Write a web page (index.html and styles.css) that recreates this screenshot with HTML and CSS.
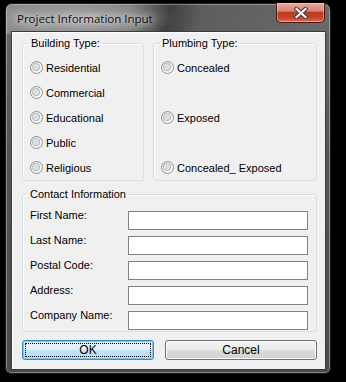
FILE: index.html
```html
<!DOCTYPE html>
<html lang="en">
<head>
    <meta charset="UTF-8">
    <title>Project Information Input</title>
    <link rel="stylesheet" href="styles.css">
</head>
<body>
<div class="window">
    <div class="titlebar">
        <span class="title">Project Information Input</span>
        <button class="close" type="button" aria-label="Close">
            <svg width="14" height="12" viewBox="0 0 14 12">
                <path d="M2.5 2 L11.5 10 M11.5 2 L2.5 10" stroke="#3a3a3a" stroke-width="4.2" stroke-linecap="square"/>
                <path d="M2.5 2 L11.5 10 M11.5 2 L2.5 10" stroke="#fff" stroke-width="2.2" stroke-linecap="square"/>
            </svg>
        </button>
    </div>
    <form class="client" id="projectForm">
        <div class="groups">
            <fieldset class="group building">
                <legend>Building Type:</legend>
                <div class="options">
                    <label class="option"><input type="radio" name="building"> Residential</label>
                    <label class="option"><input type="radio" name="building"> Commercial</label>
                    <label class="option"><input type="radio" name="building"> Educational</label>
                    <label class="option"><input type="radio" name="building"> Public</label>
                    <label class="option"><input type="radio" name="building"> Religious</label>
                </div>
            </fieldset>
            <fieldset class="group plumbing">
                <legend>Plumbing Type:</legend>
                <div class="options spread">
                    <label class="option"><input type="radio" name="plumbing"> Concealed</label>
                    <label class="option"><input type="radio" name="plumbing"> Exposed</label>
                    <label class="option"><input type="radio" name="plumbing"> Concealed_ Exposed</label>
                </div>
            </fieldset>
        </div>
        <fieldset class="group contact">
            <legend>Contact Information</legend>
            <div class="fields">
                <div class="field"><label for="firstName">First Name:</label><input type="text" id="firstName"></div>
                <div class="field"><label for="lastName">Last Name:</label><input type="text" id="lastName"></div>
                <div class="field"><label for="postalCode">Postal Code:</label><input type="text" id="postalCode"></div>
                <div class="field"><label for="address">Address:</label><input type="text" id="address"></div>
                <div class="field"><label for="company">Company Name:</label><input type="text" id="company"></div>
            </div>
        </fieldset>
        <div class="buttons">
            <button type="submit" class="btn ok">OK</button>
            <button type="button" class="btn cancel">Cancel</button>
        </div>
    </form>
</div>
</body>
</html>
```

FILE: styles.css
```css
* { box-sizing: border-box; }
html, body { margin: 0; height: 100%; }
body {
    background: #000;
    font-family: 'Liberation Sans', Arial, sans-serif;
    font-size: 11px;
    color: #000;
    overflow: hidden;
}

.window {
    position: relative;
    margin: 3px 0 0 5px;
    width: 326px;
    height: 371px;
    border: 1px solid #1e1e1e;
    border-radius: 7px 7px 6px 6px;
    padding: 0 4px 3px 5px;
    display: flex;
    flex-direction: column;
    background:
        radial-gradient(ellipse 95px 20px at 78px 15px, rgba(255,255,255,0.35), rgba(255,255,255,0) 100%),
        linear-gradient(100deg, #8c8c8c 0, #7c7c7c 38%, #3f3f3f 50%, #5e5e5e 60%, #6a6a6a 100%) top / 100% 30px no-repeat,
        linear-gradient(#6a6a6a, #555 40%, #4c4c4c);
    box-shadow: inset 0 0 0 1px rgba(255,255,255,0.3);
}

.titlebar { height: 27px; flex: none; }
.title {
    display: block;
    padding: 7px 0 0 6px;
    font-family: 'Open Sans', 'Noto Sans', sans-serif;
    font-size: 11.5px;
    line-height: 16px;
    color: #111;
    text-shadow: 0 0 6px rgba(255,255,255,0.9), 0 0 10px rgba(255,255,255,0.6);
}

.close {
    position: absolute;
    top: -1px;
    right: 5px;
    width: 49px;
    height: 20px;
    padding: 0;
    border: 1px solid #4a1a12;
    border-top: none;
    border-radius: 0 0 5px 5px;
    background: linear-gradient(#e8ab9e, #d88472 42%, #bb3a22 50%, #c4442b 78%, #dc7356);
    box-shadow: inset 0 0 0 1px rgba(255,255,255,0.35);
    display: flex;
    align-items: center;
    justify-content: center;
}

.client {
    flex: 1;
    margin: 0;
    border: 1px solid #3c3c3c;
    background: #f0f0f0;
    box-shadow: inset 1px 1px 0 #fff;
    padding: 5px 0 0 10px;
}

.groups { display: flex; gap: 9px; }

.group {
    margin: 0;
    padding: 0 0 0 7px;
    border: 1px solid #d5dfe5;
    border-radius: 3px;
    box-shadow: inset 1px 1px 0 #fff;
    min-width: 0;
}
.group legend {
    padding: 0 2px;
    margin-left: -1px;
    line-height: 13px;
}
.building { width: 122px; height: 144px; }
.plumbing { width: 164px; height: 144px; }

.options { padding-top: 5px; }
.options.spread {
    height: 130px;
    display: flex;
    flex-direction: column;
    justify-content: space-between;
}
.option {
    display: flex;
    align-items: center;
    gap: 3px;
    height: 25px;
    white-space: nowrap;
}
.option input {
    appearance: none;
    -webkit-appearance: none;
    margin: 0;
    width: 13px;
    height: 13px;
    border-radius: 50%;
    border: 1px solid #8f9091;
    background: radial-gradient(circle at 45% 45%, #d2d4d6 0, #e2e3e5 2.5px, #b9bcc0 3.6px, #f2f2f2 4.6px, #fbfbfb 6px);
    flex: none;
}

.contact {
    margin-top: 7px;
    width: 295px;
    height: 144px;
}
.contact legend { margin-left: -2px; }
.fields {
    padding-top: 8px;
    display: flex;
    flex-direction: column;
    gap: 4px;
}
.field { display: flex; align-items: flex-start; height: 21px; }
.field label { width: 98px; line-height: 13px; }
.field input {
    margin: 2px 0 0;
    width: 180px;
    height: 19px;
    border: 1px solid #828282;
    background: #fff;
    padding: 0 3px;
    font: inherit;
}

.buttons { display: flex; gap: 11px; margin-top: 8px; }
.btn {
    height: 20px;
    padding: 0;
    border-radius: 3px;
    font: inherit;
    font-size: 12px;
    color: #000;
}
.ok {
    width: 132px;
    border: 1px solid #2b8fd4;
    background: linear-gradient(#eaf6fd, #dcf0fb 50%, #c4e4f6 50%, #b4dcf2);
    box-shadow: inset 0 0 0 1px #7fc6ef;
    outline: 1px dotted #000;
    outline-offset: -4px;
}
.cancel {
    width: 152px;
    border: 1px solid #707070;
    background: linear-gradient(#f2f2f2, #ebebeb 50%, #dddddd 50%, #cfcfcf);
    box-shadow: inset 0 0 0 1px #fbfbfb;
}
```
